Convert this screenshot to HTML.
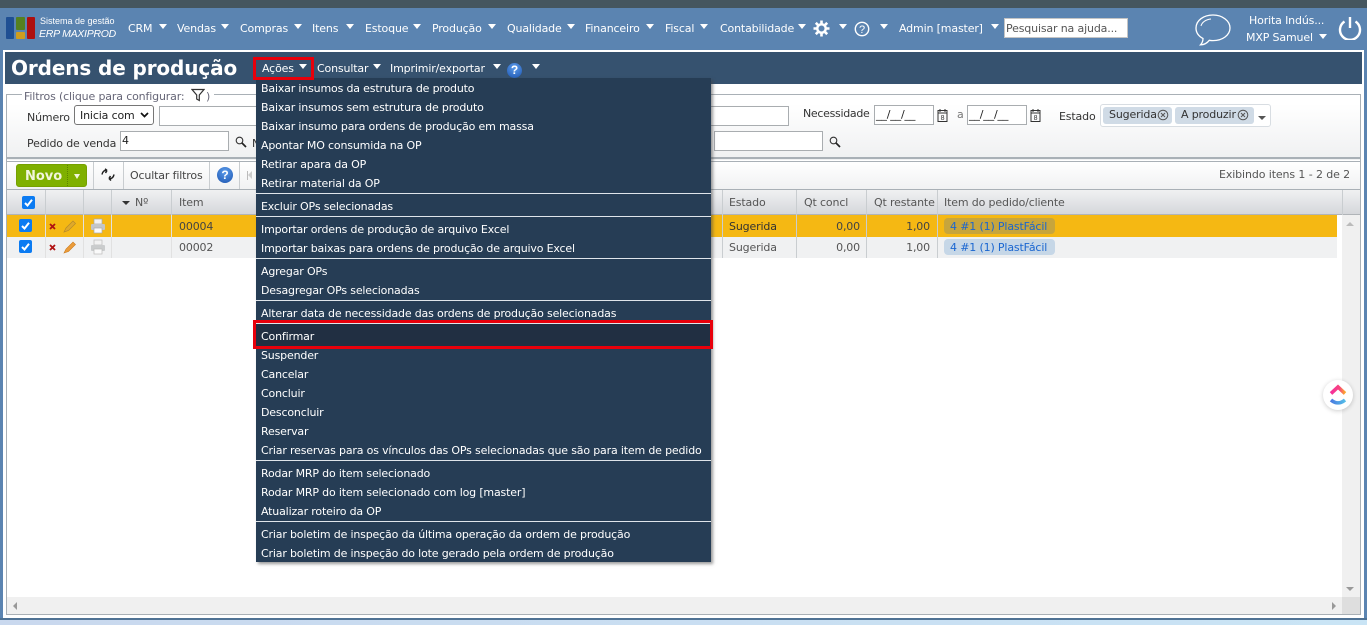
<!DOCTYPE html>
<html lang="pt"><head><meta charset="utf-8"><title>Ordens de produção</title>
<style>
*{box-sizing:border-box}
html,body{margin:0;padding:0;width:1367px;height:625px;overflow:hidden;background:#5b84b1}
body{position:relative;font:11px "DejaVu Sans",sans-serif;color:#333;letter-spacing:-.15px}
.a{position:absolute}
.t{position:absolute;white-space:nowrap;line-height:14px;height:14px}
.n{color:#fff;font-size:11px}
.c{position:absolute;width:0;height:0;border-left:4px solid transparent;border-right:4px solid transparent;border-top:5px solid #fff}
.m{position:absolute;left:261px;color:#fff;font-size:11px;white-space:nowrap;line-height:14px;letter-spacing:-.17px}
.s{position:absolute;left:256px;width:455px;height:1px;background:#dfe5ea}
.inp{position:absolute;background:#fff;border:1px solid #a9adb0;height:20px}
.v{position:absolute;width:1px;background:#c9cdd0}
.cb{position:absolute;width:13px;height:13px;background:#0b7bf2;border-radius:2px}
.cb svg{display:block}
</style></head><body>
<div class="a" style="left:0;top:0;width:1367px;height:8px;background:#45565f"></div>

<!-- logo -->
<div class="a" style="left:6px;top:17px;width:8px;height:22px;background:#1f4f93;border-radius:1px"></div>
<div class="a" style="left:16px;top:17px;width:9px;height:13px;background:#55801f;border-radius:1px"></div>
<div class="a" style="left:16px;top:32px;width:9px;height:7px;background:#cf9c1e;border-radius:1px"></div>
<div class="a" style="left:27px;top:17px;width:8px;height:22px;background:#ad0f0f;border-radius:1px"></div>
<div class="t" style="left:40px;top:14px;color:#fff;font:9px/14px 'Liberation Sans',sans-serif;letter-spacing:0">Sistema de gestão</div>
<div class="t" style="left:39px;top:27px;color:#fff;font:italic 10.5px/14px 'Liberation Sans',sans-serif;letter-spacing:-.26px">ERP MAXIPROD</div>

<!-- nav -->
<div class="t n" style="left:128px;top:22px">CRM</div><div class="c" style="left:159px;top:24px"></div>
<div class="t n" style="left:177px;top:22px">Vendas</div><div class="c" style="left:221px;top:24px"></div>
<div class="t n" style="left:240px;top:22px">Compras</div><div class="c" style="left:294px;top:24px"></div>
<div class="t n" style="left:312px;top:22px">Itens</div><div class="c" style="left:346px;top:24px"></div>
<div class="t n" style="left:365px;top:22px">Estoque</div><div class="c" style="left:413px;top:24px"></div>
<div class="t n" style="left:432px;top:22px">Produção</div><div class="c" style="left:488px;top:24px"></div>
<div class="t n" style="left:507px;top:22px">Qualidade</div><div class="c" style="left:567px;top:24px"></div>
<div class="t n" style="left:585px;top:22px">Financeiro</div><div class="c" style="left:646px;top:24px"></div>
<div class="t n" style="left:665px;top:22px">Fiscal</div><div class="c" style="left:700px;top:24px"></div>
<div class="t n" style="left:720px;top:22px">Contabilidade</div><div class="c" style="left:798px;top:24px"></div>
<svg class="a" style="left:813px;top:20px" width="17" height="17" viewBox="0 0 17 17"><g fill="none" stroke="#fff"><circle cx="8.5" cy="8.5" r="4.2" stroke-width="2.4"/><path d="M8.5 0.5v3M8.5 13.5v3M0.5 8.5h3M13.500 8.5h3M2.8 2.8l2.100 2.100M12.100 12.100l2.100 2.100M14.200 2.8l-2.100 2.100M4.900 12.100l-2.100 2.100" stroke-width="2.6"/></g></svg>
<div class="c" style="left:839px;top:24px"></div>
<svg class="a" style="left:854px;top:21px" width="16" height="16" viewBox="0 0 16 16"><circle cx="8" cy="8" r="6.7" fill="none" stroke="#fff" stroke-width="1.4"/><text x="8" y="12" text-anchor="middle" fill="#fff" font-size="11" font-family="Liberation Sans,sans-serif">?</text></svg>
<div class="c" style="left:880px;top:24px"></div>
<div class="t n" style="left:899px;top:22px">Admin [master]</div><div class="c" style="left:991px;top:24px"></div>
<div class="a" style="left:1004px;top:18px;width:124px;height:20px;background:#fff;border:1px solid #c4c4c4;color:#555;padding:3px 1px 0;line-height:14px;white-space:nowrap;font-size:11px">Pesquisar na ajuda...</div>

<svg class="a" style="left:1194px;top:13px" width="38" height="34" viewBox="0 0 38 34"><path d="M19 2C9.500 2 2 7.500 2 15c0 4.500 2.800 8.300 7 10.500 0 2.500-1 4.800-2.500 6.300 3.500 0 6.800-2 8.800-4.500 1.200.2 2.400.3 3.700.3 9.500 0 17-5.500 17-12.600S28.500 2 19 2z" fill="none" stroke="#fff" stroke-width="1.300"/><path d="M7 13c1-4 5-6.500 10-7" fill="none" stroke="#fff" stroke-width="1"/></svg>
<div class="t n" style="left:1249px;top:14px">Horita Indús...</div>
<div class="t n" style="left:1246px;top:31px">MXP Samuel</div><div class="c" style="left:1319px;top:34px"></div>
<svg class="a" style="left:1337px;top:14px" width="26" height="26" viewBox="0 0 26 26"><path d="M7.500 7.500a10 10 0 1 0 11 0" fill="none" stroke="#fff" stroke-width="2.400"/><path d="M13 3v11" stroke="#fff" stroke-width="2.400" fill="none"/></svg>

<!-- main panel -->
<div class="a" style="left:3px;top:50px;width:1361px;height:568px;background:#fff"></div>
<div class="a" style="left:5px;top:52px;width:1357px;height:32px;background:#36526f"></div>
<div class="t" style="left:11px;top:56px;color:#fff;font:bold 20px/24px 'DejaVu Sans',sans-serif;height:24px;letter-spacing:-.12px">Ordens de produção</div>

<div class="t n" style="left:262px;top:62px">Ações</div><div class="c" style="left:299px;top:64px"></div>
<div class="t n" style="left:317px;top:62px">Consultar</div><div class="c" style="left:373px;top:64px"></div>
<div class="t n" style="left:390px;top:62px">Imprimir/exportar</div><div class="c" style="left:493px;top:64px"></div>
<div class="a" style="left:507px;top:63px;width:15px;height:15px;border-radius:50%;background:radial-gradient(circle at 50% 30%,#5c9bea,#1c55b0);color:#fff;font:bold 12px/15px 'Liberation Sans',sans-serif;text-align:center">?</div>
<div class="c" style="left:532px;top:64px"></div>

<!-- filter panel -->
<div class="a" style="left:6px;top:84px;width:1355px;height:76px;background:linear-gradient(#fff 0,#fff 20px,#eff0f1 100%)"></div>
<div class="a" style="left:6px;top:94px;width:1355px;height:65px;border:1px solid #a9b0b6;border-bottom:2px solid #a9b0b6"></div>
<div class="a" style="left:22px;top:89px;width:192px;height:12px;background:#fff"></div>
<div class="t" style="left:24px;top:90px;color:#667">Filtros (clique para configurar:</div>
<svg class="a" style="left:191px;top:88px" width="14" height="14" viewBox="0 0 14 14"><path d="M1 1.500h12L8.300 7v5.500L5.700 11V7z" fill="none" stroke="#333" stroke-width="1.200"/></svg>
<div class="t" style="left:206px;top:90px;color:#667">)</div>
<div class="t" style="left:27px;top:111px">Número</div>
<div class="a" style="left:74px;top:105px;width:80px;height:20px;background:#fff;border:1px solid #767676;border-radius:3px;padding-left:5px;line-height:20px;color:#222;white-space:nowrap">Inicia com</div>
<svg class="a" style="left:140px;top:112px" width="9" height="6" viewBox="0 0 9 6"><path d="M1 1l3.500 3.500L8 1" fill="none" stroke="#111" stroke-width="1.700"/></svg>
<div class="inp" style="left:159px;top:106px;width:100px"></div>
<div class="t" style="left:27px;top:137px">Pedido de venda</div>
<div class="inp" style="left:120px;top:131px;width:109px;padding-left:1px;line-height:18px;color:#222">4</div>
<svg class="a" style="left:235px;top:136px" width="12" height="12" viewBox="0 0 12 12"><circle cx="4.500" cy="4.500" r="3.300" fill="none" stroke="#333" stroke-width="1.100"/><path d="M7 7l4 4" stroke="#222" stroke-width="1.700"/></svg>
<div class="t" style="left:252px;top:137px">N</div>

<div class="inp" style="left:705px;top:106px;width:84px"></div>
<div class="t" style="left:803px;top:107px;letter-spacing:-.3px">Necessidade</div>
<div class="inp" style="left:874px;top:105px;width:60px;color:#222;padding-left:1px;line-height:18px">__/__/__</div>
<svg class="a" style="left:936px;top:108px" width="13" height="15" viewBox="0 0 13 15"><rect x="2" y="2.500" width="9" height="11" fill="none" stroke="#333"/><path d="M2 5h9M4 1v3M9 1v3" stroke="#333"/><text x="6.500" y="12" font-size="7" text-anchor="middle" fill="#333" font-family="Liberation Sans,sans-serif">8</text></svg>
<div class="t" style="left:957px;top:108px;color:#777">a</div>
<div class="inp" style="left:967px;top:105px;width:60px;color:#222;padding-left:1px;line-height:18px">__/__/__</div>
<svg class="a" style="left:1029px;top:108px" width="13" height="15" viewBox="0 0 13 15"><rect x="2" y="2.500" width="9" height="11" fill="none" stroke="#333"/><path d="M2 5h9M4 1v3M9 1v3" stroke="#333"/><text x="6.500" y="12" font-size="7" text-anchor="middle" fill="#333" font-family="Liberation Sans,sans-serif">8</text></svg>
<div class="t" style="left:1059px;top:110px">Estado</div>
<div class="a" style="left:1100px;top:104px;width:171px;height:23px;background:#fff;border:1px solid #d8dde2;border-radius:3px"></div>
<div class="a" style="left:1103px;top:107px;width:69px;height:17px;background:#d0dbe6;border-radius:3px"></div>
<div class="t" style="left:1109px;top:108px">Sugerida</div>
<svg class="a" style="left:1157px;top:109px" width="12" height="12" viewBox="0 0 12 12"><circle cx="6" cy="6" r="4.800" fill="none" stroke="#555"/><path d="M4 4l4 4M8 4l-4 4" stroke="#555"/></svg>
<div class="a" style="left:1175px;top:107px;height:17px;background:#d0dbe6;border-radius:3px;width:79px"></div>
<div class="t" style="left:1181px;top:108px">A produzir</div>
<svg class="a" style="left:1237px;top:109px" width="12" height="12" viewBox="0 0 12 12"><circle cx="6" cy="6" r="4.800" fill="none" stroke="#555"/><path d="M4 4l4 4M8 4l-4 4" stroke="#555"/></svg>
<div class="a" style="left:1258px;top:116px;border-left:4px solid transparent;border-right:4px solid transparent;border-top:4px solid #555"></div>
<div class="inp" style="left:714px;top:131px;width:109px"></div>
<svg class="a" style="left:829px;top:136px" width="12" height="12" viewBox="0 0 12 12"><circle cx="4.500" cy="4.500" r="3.300" fill="none" stroke="#333" stroke-width="1.100"/><path d="M7 7l4 4" stroke="#222" stroke-width="1.700"/></svg>

<!-- toolbar -->
<div class="a" style="left:6px;top:161px;width:1355px;height:29px;background:linear-gradient(#fff,#f0f1f2);border:1px solid #a9b0b6;border-bottom:none"></div>
<div class="a" style="left:16px;top:164px;width:71px;height:23px;background:#7fb000;border-radius:3px;border:1px solid #76a000"></div>
<div class="t" style="left:25px;top:170px;color:#f2f5dc;font:bold 13px/14px 'DejaVu Sans',sans-serif;letter-spacing:0">Novo</div>
<div class="a" style="left:67px;top:165px;width:1px;height:21px;border-left:1px dotted #5d8400"></div>
<div class="a" style="left:74px;top:174px;border-left:3px solid transparent;border-right:3px solid transparent;border-top:5px solid #f2f5dc"></div>
<div class="v" style="top:162px;height:27px;left:93px"></div>
<svg class="a" style="left:101px;top:168px" width="14" height="13" viewBox="0 0 14 13"><path d="M1 6.500C1.500 3.500 3.500 2 6 2.500M6 2.500L4 0.800M6 2.500L4.500 5M13 6.500c-.5 3-2.500 4.500-5 4M8 10.500l2 2M8 10.500L9.500 8" fill="none" stroke="#222" stroke-width="1.500"/></svg>
<div class="v" style="top:162px;height:27px;left:123px"></div>
<div class="t" style="left:130px;top:169px;color:#444">Ocultar filtros</div>
<div class="v" style="top:162px;height:27px;left:209px"></div>
<div class="a" style="left:217px;top:167px;width:16px;height:16px;border-radius:50%;background:radial-gradient(circle at 50% 30%,#5c9bea,#1c55b0);color:#fff;font:bold 12px/16px 'Liberation Sans',sans-serif;text-align:center">?</div>
<div class="v" style="top:162px;height:27px;left:239px"></div>
<div class="a" style="left:247px;top:171px;width:1px;height:9px;background:#bbb"></div>
<div class="a" style="left:248px;top:171px;border-top:4.500px solid transparent;border-bottom:4.500px solid transparent;border-right:4px solid #ccc"></div>
<div class="t" style="left:1219px;top:168px;color:#555;letter-spacing:-.11px">Exibindo itens 1 - 2 de 2</div>

<!-- table -->
<div class="a" style="left:6px;top:189px;width:1355px;height:26px;background:linear-gradient(#f0f1f2,#d5d7db);border-top:1px solid #a9b0b6;border-bottom:1px solid #b0b4b8"></div>
<div class="v" style="left:45px;top:190px;height:25px"></div>
<div class="v" style="left:83px;top:190px;height:25px"></div>
<div class="v" style="left:111px;top:190px;height:25px"></div>
<div class="v" style="left:171px;top:190px;height:25px"></div>
<div class="cb" style="left:22px;top:196px"><svg width="13" height="13" viewBox="0 0 13 13"><path d="M3 7l2.500 2.500L10 3.800" fill="none" stroke="#fff" stroke-width="2"/></svg></div>
<div class="a" style="left:122px;top:201px;border-left:4px solid transparent;border-right:4px solid transparent;border-top:4px solid #333"></div>
<div class="t" style="left:135px;top:196px;color:#555">Nº</div>
<div class="t" style="left:179px;top:196px;color:#555">Item</div>

<div class="a" style="left:6px;top:215px;width:1331px;height:22px;background:#f5b813"></div>
<div class="a" style="left:6px;top:237px;width:1331px;height:21px;background:#f0f1f2"></div>
<div class="v" style="left:45px;top:215px;height:43px;background:#e1e1e1"></div>
<div class="v" style="left:83px;top:215px;height:43px;background:#e1e1e1"></div>
<div class="v" style="left:111px;top:215px;height:43px;background:#e1e1e1"></div>
<div class="v" style="left:171px;top:215px;height:43px;background:#e1e1e1"></div>
<div class="cb" style="left:19px;top:219px"><svg width="13" height="13" viewBox="0 0 13 13"><path d="M3 7l2.500 2.500L10 3.800" fill="none" stroke="#fff" stroke-width="2"/></svg></div>
<div class="cb" style="left:19px;top:240px"><svg width="13" height="13" viewBox="0 0 13 13"><path d="M3 7l2.500 2.500L10 3.800" fill="none" stroke="#fff" stroke-width="2"/></svg></div>
<svg class="a" style="left:49px;top:223px" width="7" height="7" viewBox="0 0 7 7"><path d="M1 1l5 5M6 1L1 6" stroke="#b01212" stroke-width="1.800"/></svg>
<svg class="a" style="left:49px;top:244px" width="7" height="7" viewBox="0 0 7 7"><path d="M1 1l5 5M6 1L1 6" stroke="#b01212" stroke-width="1.800"/></svg>
<svg class="a" style="left:63px;top:220px" width="14" height="13" viewBox="0 0 14 13"><path d="M1 12l2-4 7-7 2.500 2.500-7 7z" fill="#e0a92a" stroke="#b58a2a" stroke-width=".7"/></svg>
<svg class="a" style="left:63px;top:240px" width="14" height="14" viewBox="0 0 14 14"><path d="M1 13l2-4 7-7 2.500 2.500-7 7z" fill="#ec9c3a" stroke="#c97c20" stroke-width=".6"/></svg>
<svg class="a" style="left:90px;top:218px" width="16" height="16" viewBox="0 0 16 16"><rect x="4" y="1" width="8" height="5" fill="#f2f2f2" stroke="#aaa" stroke-width=".7"/><rect x="1" y="6" width="14" height="6" rx="1" fill="#c4c6c8"/><rect x="4" y="10" width="8" height="5" fill="#fafafa" stroke="#aaa" stroke-width=".7"/></svg>
<svg class="a" style="left:90px;top:239px" width="16" height="16" viewBox="0 0 16 16"><rect x="4" y="1" width="8" height="5" fill="#f2f2f2" stroke="#bbb" stroke-width=".7"/><rect x="1" y="6" width="14" height="6" rx="1" fill="#cacccd"/><rect x="4" y="10" width="8" height="5" fill="#fafafa" stroke="#bbb" stroke-width=".7"/></svg>
<div class="t" style="left:179px;top:220px;color:#444">00004</div>
<div class="t" style="left:179px;top:241px;color:#555">00002</div>

<div class="v" style="left:722px;top:190px;height:68px"></div>
<div class="v" style="left:796px;top:190px;height:68px"></div>
<div class="v" style="left:866px;top:190px;height:68px"></div>
<div class="v" style="left:937px;top:190px;height:68px"></div>
<div class="v" style="left:1342px;top:190px;height:25px"></div>
<div class="t" style="left:729px;top:196px;color:#555">Estado</div>
<div class="t" style="left:804px;top:196px;color:#555">Qt concl</div>
<div class="t" style="left:874px;top:196px;color:#555">Qt restante</div>
<div class="t" style="left:944px;top:196px;color:#555">Item do pedido/cliente</div>
<div class="t" style="left:729px;top:220px;color:#333">Sugerida</div>
<div class="t" style="left:729px;top:241px;color:#555">Sugerida</div>
<div class="t" style="left:790px;width:70px;text-align:right;top:220px;color:#444">0,00</div>
<div class="t" style="left:790px;width:70px;text-align:right;top:241px;color:#555">0,00</div>
<div class="t" style="left:860px;width:70px;text-align:right;top:220px;color:#444">1,00</div>
<div class="t" style="left:860px;width:70px;text-align:right;top:241px;color:#555">1,00</div>
<div class="a" style="left:944px;top:218px;width:111px;height:16px;border-radius:4px;background:#c7a53c"></div>
<div class="a" style="left:944px;top:239px;width:111px;height:16px;border-radius:4px;background:#c6d7e7"></div>
<div class="t" style="left:950px;top:220px;color:#1a66d0">4 #1 (1) PlastFácil</div>
<div class="t" style="left:950px;top:241px;color:#1a66d0">4 #1 (1) PlastFácil</div>

<!-- scrollbars -->
<div class="a" style="left:1342px;top:215px;width:18px;height:383px;background:#f0f0f0"></div>
<div class="a" style="left:1346px;top:222px;border-left:4px solid transparent;border-right:4px solid transparent;border-bottom:4px solid #bbb"></div>
<div class="a" style="left:1346px;top:587px;border-left:4px solid transparent;border-right:4px solid transparent;border-top:4px solid #999"></div>
<div class="a" style="left:7px;top:597px;width:1353px;height:17px;background:#f0f0f0"></div>
<div class="a" style="left:1342px;top:597px;width:18px;height:17px;background:#dedede"></div>
<div class="a" style="left:13px;top:602px;border-top:4px solid transparent;border-bottom:4px solid transparent;border-right:4px solid #999"></div>
<div class="a" style="left:1332px;top:602px;border-top:4px solid transparent;border-bottom:4px solid transparent;border-left:4px solid #999"></div>
<div class="a" style="left:6px;top:94px;width:1px;height:521px;background:#a9b0b6"></div>
<div class="a" style="left:1360px;top:94px;width:1px;height:521px;background:#a9b0b6"></div>
<div class="a" style="left:6px;top:614px;width:1355px;height:1px;background:#a9b0b6"></div>
<div class="a" style="left:0;top:618px;width:1367px;height:2px;background:#4f7294"></div>
<div class="a" style="left:0;top:620px;width:1367px;height:5px;background:linear-gradient(90deg,#c9d8ee,#c9e4f5)"></div>

<!-- clickup -->
<div class="a" style="left:1323px;top:380px;width:30px;height:30px;border-radius:50%;background:#fff;box-shadow:0 1px 5px rgba(0,0,0,.2)"></div>
<svg class="a" style="left:1329px;top:383px" width="18" height="24" viewBox="0 0 18 24"><defs><linearGradient id="p" x1="0" x2="1"><stop offset="0" stop-color="#f62f9c"/><stop offset=".6" stop-color="#f7447f"/><stop offset="1" stop-color="#fbab2a"/></linearGradient><linearGradient id="b" x1="0" x2="1"><stop offset="0" stop-color="#4a7be0"/><stop offset="1" stop-color="#54bde8"/></linearGradient></defs><path d="M2 10.500L9 4l7 6.500" fill="none" stroke="url(#p)" stroke-width="3.600"/><path d="M2 17c4.500 3.800 9.500 3.800 14 0" fill="none" stroke="url(#b)" stroke-width="3.600"/></svg>

<!-- menu -->
<div class="a" style="left:256px;top:78px;width:455px;height:484px;background:#263d55;box-shadow:2px 2px 3px rgba(70,70,70,.55)"></div>
<div class="m" style="top:82px">Baixar insumos da estrutura de produto</div>
<div class="m" style="top:101px">Baixar insumos sem estrutura de produto</div>
<div class="m" style="top:120px">Baixar insumo para ordens de produção em massa</div>
<div class="m" style="top:139px">Apontar MO consumida na OP</div>
<div class="m" style="top:158px">Retirar apara da OP</div>
<div class="m" style="top:177px">Retirar material da OP</div>
<div class="s" style="top:193px"></div>
<div class="m" style="top:200px">Excluir OPs selecionadas</div>
<div class="s" style="top:216px"></div>
<div class="m" style="top:223px">Importar ordens de produção de arquivo Excel</div>
<div class="m" style="top:242px">Importar baixas para ordens de produção de arquivo Excel</div>
<div class="s" style="top:258px"></div>
<div class="m" style="top:265px">Agregar OPs</div>
<div class="m" style="top:284px">Desagregar OPs selecionadas</div>
<div class="s" style="top:300px"></div>
<div class="m" style="top:307px">Alterar data de necessidade das ordens de produção selecionadas</div>
<div class="s" style="top:323px"></div>
<div class="a" style="left:256px;top:324px;width:455px;height:22px;background:#212f42"></div>
<div class="m" style="top:330px">Confirmar</div>
<div class="m" style="top:349px">Suspender</div>
<div class="m" style="top:368px">Cancelar</div>
<div class="m" style="top:387px">Concluir</div>
<div class="m" style="top:406px">Desconcluir</div>
<div class="m" style="top:425px">Reservar</div>
<div class="m" style="top:444px">Criar reservas para os vínculos das OPs selecionadas que são para item de pedido</div>
<div class="s" style="top:460px"></div>
<div class="m" style="top:467px">Rodar MRP do item selecionado</div>
<div class="m" style="top:486px">Rodar MRP do item selecionado com log [master]</div>
<div class="m" style="top:505px">Atualizar roteiro da OP</div>
<div class="s" style="top:521px"></div>
<div class="m" style="top:528px">Criar boletim de inspeção da última operação da ordem de produção</div>
<div class="m" style="top:547px">Criar boletim de inspeção do lote gerado pela ordem de produção</div>

<!-- highlights -->
<div class="a" style="left:253px;top:57px;width:61px;height:23px;border:3px solid #e8000b"></div>
<div class="a" style="left:253px;top:320px;width:460px;height:29px;border:3px solid #e8000b"></div>
</body></html>
